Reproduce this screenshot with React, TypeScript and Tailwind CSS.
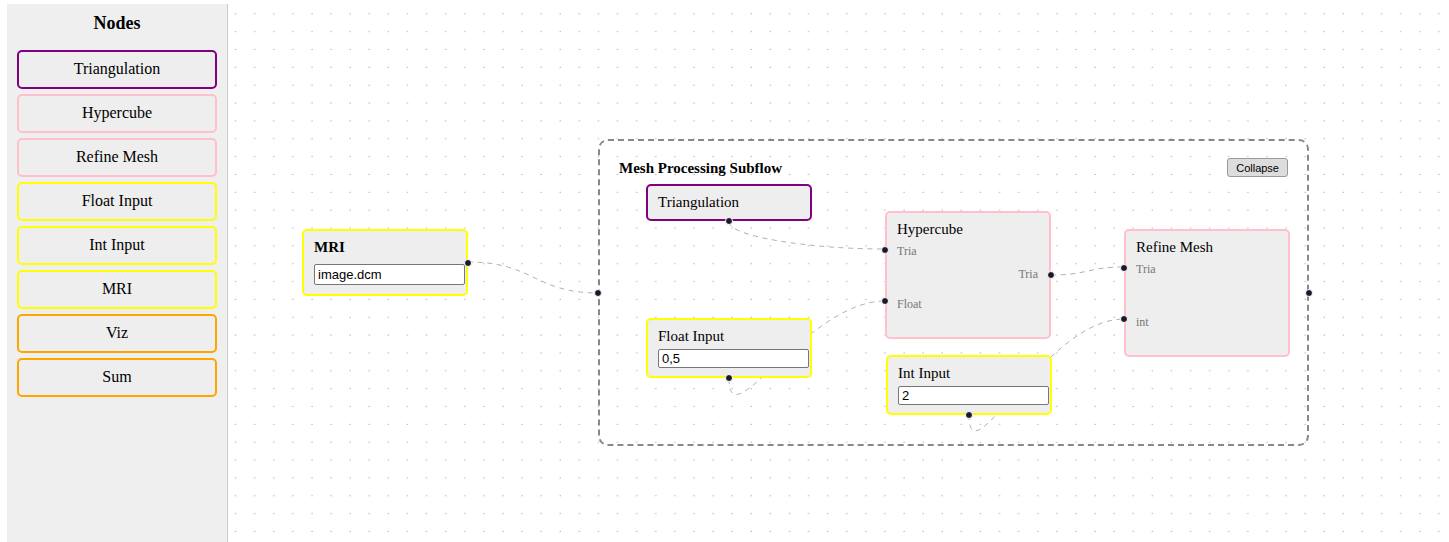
import type { ReactNode } from "react";

const palette = [
  { name: "Triangulation", border: "border-[#800080]" },
  { name: "Hypercube", border: "border-[#ffc0cb]" },
  { name: "Refine Mesh", border: "border-[#ffc0cb]" },
  { name: "Float Input", border: "border-[#ffff00]" },
  { name: "Int Input", border: "border-[#ffff00]" },
  { name: "MRI", border: "border-[#ffff00]" },
  { name: "Viz", border: "border-[#ffa500]" },
  { name: "Sum", border: "border-[#ffa500]" },
];

function Sidebar() {
  return (
    <aside className="mt-1 w-[221px] shrink-0 border-r border-[#cccccc] bg-[#efefef] px-2.5">
      <h3 className="mt-2 text-center text-lg leading-[22px] font-bold">Nodes</h3>
      <ul className="mt-4 flex flex-col gap-[5px]">
        {palette.map((item) => (
          <li
            key={item.name}
            draggable
            className={`flex h-[39px] cursor-grab items-center justify-center rounded-[5px] border-2 bg-[#eeeeee] pb-px text-base ${item.border}`}
          >
            {item.name}
          </li>
        ))}
      </ul>
    </aside>
  );
}

function Handle({ className }: { className: string }) {
  return <span className={`absolute size-2 rounded-full border border-white bg-[#1a192b] ${className}`} />;
}

function FlowNode({
  title,
  className,
  bold = false,
  children,
}: {
  title: string;
  className: string;
  bold?: boolean;
  children?: ReactNode;
}) {
  return (
    <section className={`absolute w-[166px] rounded-[5px] border-2 bg-[#eeeeee] pt-2 pr-px pl-2.5 ${className}`}>
      <h4 className={`text-[15px] leading-[17px] ${bold ? "font-bold" : "font-normal"}`}>{title}</h4>
      {children}
    </section>
  );
}

function ValueInput({ label, value, className }: { label: string; value: string; className: string }) {
  return (
    <input
      type="text"
      aria-label={label}
      defaultValue={value}
      className={`block w-full rounded-[2px] border border-[#767676] bg-white px-[3px] font-['Liberation_Sans',sans-serif] text-[13px] leading-4 ${className}`}
    />
  );
}

function Edges() {
  return (
    <svg className="pointer-events-none absolute inset-0 size-full" aria-hidden="true">
      <defs>
        <pattern id="dots" x="-2.2" y="-3.5" width="19.1" height="17.85" patternUnits="userSpaceOnUse">
          <ellipse cx="9.7" cy="17.2" rx="0.55" ry="0.55" fill="#81818a" />
        </pattern>
      </defs>
      <rect width="100%" height="100%" fill="url(#dots)" />
      <g fill="none" stroke="#b1b1b7" strokeWidth="1" strokeDasharray="5 4.6">
        <path d="M240 262 C306 262 306 293 371 293" />
        <path d="M501 222 C501 236 579 249 657 249" />
        <path d="M501 379 C501 440 579 301 657 301" />
        <path d="M741 415 C741 481 818 319 896 319" />
        <path d="M823 275 C860 275 860 267 896 267" />
      </g>
    </svg>
  );
}

function Canvas() {
  return (
    <main className="relative mr-2 flex-1 overflow-hidden">
      <Edges />
      <section className="absolute top-[139px] left-[370px] h-[307px] w-[711px] rounded-[10px] border-2 border-dashed border-[#888888]">
        <header className="flex items-center justify-between px-[19px] pt-[17px]">
          <h4 className="text-[15px] leading-[18px] font-bold">Mesh Processing Subflow</h4>
          <button
            type="button"
            className="h-[19px] rounded-[3px] border border-[#999999] bg-[#dddddd] px-2 font-['Liberation_Sans',sans-serif] text-[11px] leading-4"
          >
            Collapse
          </button>
        </header>
        <Handle className="top-1/2 left-0 -translate-x-[6px] -translate-y-1/2" />
        <Handle className="top-1/2 right-0 translate-x-[6px] -translate-y-1/2" />
      </section>

      <FlowNode title="MRI" bold className="top-[229px] left-[74px] h-[67px] border-[#ffff00]">
        <ValueInput label="MRI file" value="image.dcm" className="mt-2 h-[21px]" />
        <Handle className="top-1/2 right-0 translate-x-[6px] -translate-y-1/2" />
      </FlowNode>

      <FlowNode title="Triangulation" className="top-[184px] left-[418px] h-[37px] border-[#800080]">
        <Handle className="bottom-0 left-1/2 -translate-x-1/2 translate-y-[6px]" />
      </FlowNode>

      <FlowNode title="Float Input" className="top-[318px] left-[418px] h-[60px] border-[#ffff00]">
        <ValueInput label="Float value" value="0,5" className="mt-1 h-[19px]" />
        <Handle className="bottom-0 left-1/2 -translate-x-1/2 translate-y-[6px]" />
      </FlowNode>

      <FlowNode title="Int Input" className="top-[355px] left-[658px] h-[60px] border-[#ffff00]">
        <ValueInput label="Int value" value="2" className="mt-1 h-[19px]" />
        <Handle className="bottom-0 left-1/2 -translate-x-1/2 translate-y-[6px]" />
      </FlowNode>

      <FlowNode title="Hypercube" className="top-[211px] left-[657px] h-[128px] border-[#ffc0cb]">
        <div className="mt-[7px] flex flex-col pr-2.5 text-[12px] leading-3 text-[#777777]">
          <span>Tria</span>
          <span className="mt-[11px] text-right">Tria</span>
          <span className="mt-[18px]">Float</span>
        </div>
        <Handle className="top-[30%] left-0 -translate-x-[6px] -translate-y-1/2" />
        <Handle className="top-[71%] left-0 -translate-x-[6px] -translate-y-1/2" />
        <Handle className="top-1/2 right-0 translate-x-[6px] -translate-y-1/2" />
      </FlowNode>

      <FlowNode title="Refine Mesh" className="top-[229px] left-[896px] h-[128px] border-[#ffc0cb]">
        <div className="mt-[7px] flex flex-col gap-[41px] text-[12px] leading-3 text-[#777777]">
          <span>Tria</span>
          <span>int</span>
        </div>
        <Handle className="top-[30%] left-0 -translate-x-[6px] -translate-y-1/2" />
        <Handle className="top-[71%] left-0 -translate-x-[6px] -translate-y-1/2" />
      </FlowNode>
    </main>
  );
}

export default function App() {
  return (
    <div className="flex min-h-screen bg-white pl-[7px] font-['Liberation_Serif',serif] text-black">
      <Sidebar />
      <Canvas />
    </div>
  );
}
